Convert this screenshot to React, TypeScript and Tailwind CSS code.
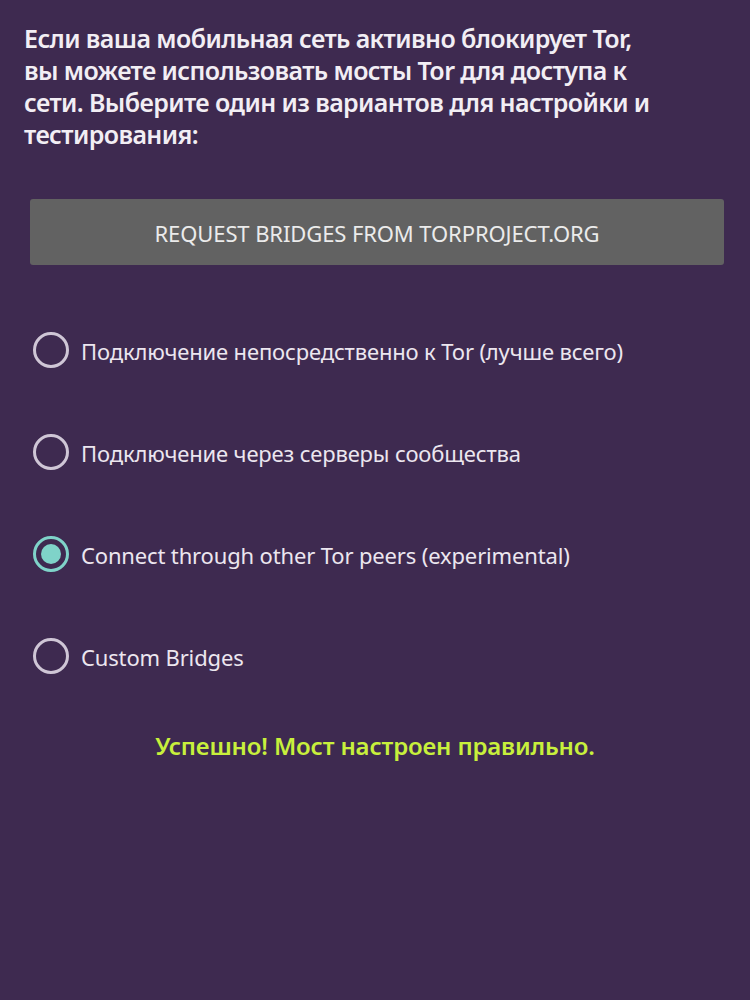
import { useState } from 'react';

const OPTIONS = [
  'Подключение непосредственно к Tor (лучше всего)',
  'Подключение через серверы сообщества',
  'Connect through other Tor peers (experimental)',
  'Custom Bridges',
];

function Radio({ checked }: { checked: boolean }) {
  return (
    <span
      className={`flex h-[36px] w-[36px] shrink-0 items-center justify-center rounded-full border-[3px] ${
        checked ? 'border-[#7fd3c9]' : 'border-[#cfc6d6]'
      }`}
    >
      {checked && <span className="h-[20px] w-[20px] rounded-full bg-[#7fd3c9]" />}
    </span>
  );
}

export default function App() {
  const [selected, setSelected] = useState(2);

  return (
    <div className="min-h-[1000px] bg-[#3e2a50] font-['Noto_Sans',sans-serif]">
      <div className="px-[24px] pt-[22px]">
        <p className="text-[25px] font-semibold leading-[32px] tracking-[-0.6px] text-[#f2eef4]">
          Если ваша мобильная сеть активно блокирует Tor,
          <br />
          вы можете использовать мосты Tor для доступа к
          <br />
          сети. Выберите один из вариантов для настройки и
          <br />
          тестирования:
        </p>
      </div>

      {/* Request bridges */}
      <div className="pl-[30px] pr-[26px] pt-[49px]">
        <button className="flex h-[66px] w-full items-center justify-center rounded-[3px] bg-[#626262] pt-[3px] text-[22px] tracking-[-0.1px] text-[#ebebeb]">
          REQUEST BRIDGES FROM TORPROJECT.ORG
        </button>
      </div>

      {/* Options */}
      <div className="flex flex-col gap-[66px] px-[33px] pt-[67px]">
        {OPTIONS.map((label, i) => (
          <label
            key={label}
            className="flex h-[36px] cursor-pointer items-center gap-[12px]"
            onClick={() => setSelected(i)}
          >
            <Radio checked={selected === i} />
            <span className="pt-[2px] text-[22px] tracking-[-0.15px] text-[#ece6ef]">{label}</span>
          </label>
        ))}
      </div>

      <p className="pt-[54px] text-center text-[24px] font-semibold tracking-[-0.15px] text-[#c8f03c]">
        Успешно! Мост настроен правильно.
      </p>
    </div>
  );
}
